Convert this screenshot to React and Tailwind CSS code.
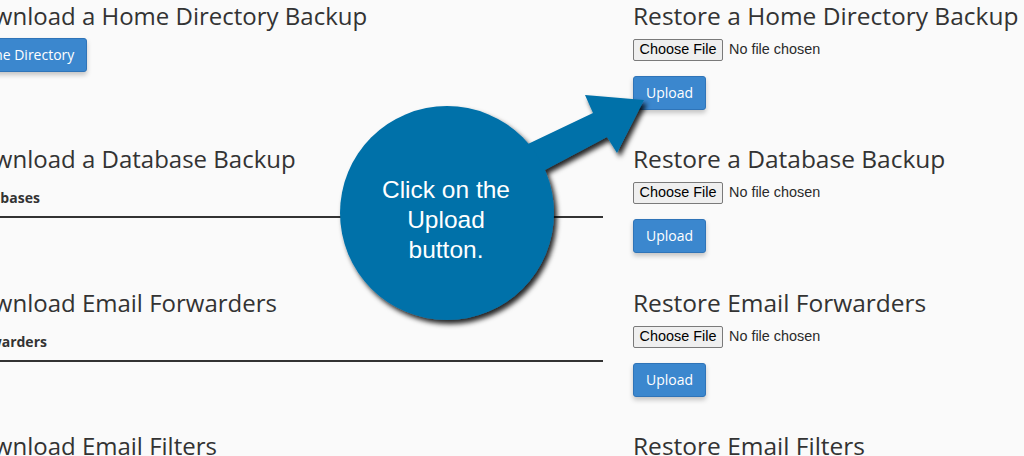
import React from "react";

const OS = { fontFamily: '"Open Sans", "Liberation Sans", sans-serif' };

function Heading({ children, size = "text-[24px]" }) {
  return (
    <h3 className={"m-0 whitespace-nowrap font-normal leading-[26px] text-[#333] " + size}>
      {children}
    </h3>
  );
}

function BlueButton({ children, className = "" }) {
  return (
    <div
      className={
        "inline-flex h-[34px] items-center whitespace-nowrap rounded-[3px] border border-[#2f74b8] bg-[#3b87ce] px-[12px] text-[14px] leading-[20px] text-white shadow-[0_3px_5px_rgba(0,0,0,0.22)] " +
        className
      }
    >
      {children}
    </div>
  );
}

function FileInput() {
  return (
    <div className="flex h-[22px] items-center whitespace-nowrap font-['Liberation_Sans',Arial,sans-serif] text-[14.4px]">
      <div className="flex h-[22px] w-[90px] items-center justify-center rounded-[2px] border border-[#7a7a7a] bg-[#efefef] text-black">
        Choose File
      </div>
      <span className="ml-[6px] text-[#2a2a2a]">No file chosen</span>
    </div>
  );
}

function RestoreSection({ title, h }) {
  return (
    <div className={"pt-[3px] " + h}>
      <Heading size="text-[24.5px]">{title}</Heading>
      <div className="mt-[10px]">
        <FileInput />
      </div>
      <div className="mt-[15px]">
        <BlueButton>Upload</BlueButton>
      </div>
    </div>
  );
}

function DownloadSection({ title, label, h }) {
  return (
    <div className={"pt-[3px] " + h}>
      <Heading>{title}</Heading>
      <div className="mt-[16px] ml-[5px] whitespace-nowrap text-[14px] font-bold leading-[20px] text-[#333]">
        {label}
      </div>
      <div className="mt-[8px] h-[2px] w-full bg-[#333]" />
    </div>
  );
}

export default function App() {
  return (
    <div
      className="relative h-[456px] w-[1024px] overflow-hidden bg-[#fafafa]"
      style={OS}
    >
      <div className="flex ml-[-38px]">
        <div className="w-[641px] shrink-0">
          <div className="h-[143px] pt-[3px]">
            <Heading>Download a Home Directory Backup</Heading>
            <div className="mt-[9px] ml-[-4px]">
              <BlueButton>Home Directory</BlueButton>
            </div>
          </div>
          <DownloadSection
            title="Download a Database Backup"
            label="Databases"
            h="h-[144px]"
          />
          <DownloadSection
            title="Download Email Forwarders"
            label="Forwarders"
            h="h-[143px]"
          />
          <div className="pt-[3px]">
            <Heading>Download Email Filters</Heading>
          </div>
        </div>
        <div className="ml-[30px] w-[636px] shrink-0">
          <RestoreSection title="Restore a Home Directory Backup" h="h-[143px]" />
          <RestoreSection title="Restore a Database Backup" h="h-[144px]" />
          <RestoreSection title="Restore Email Forwarders" h="h-[143px]" />
          <div className="pt-[3px]">
            <Heading size="text-[24.5px]">Restore Email Filters</Heading>
          </div>
        </div>
      </div>

      <svg
        className="pointer-events-none absolute left-0 top-0"
        width="1024"
        height="456"
        viewBox="0 0 1024 456"
      >
        <defs>
          <filter id="sh" x="-20%" y="-20%" width="140%" height="140%">
            <feDropShadow dx="3" dy="4" stdDeviation="2.5" floodColor="#000" floodOpacity="0.85" />
          </filter>
        </defs>
        <g filter="url(#sh)" fill="#0071a9">
          <polygon points="509,153 593,113 585,95 644,100 617,153 607,137 526,180" />
          <circle cx="447" cy="213" r="107" />
        </g>
      </svg>
      <div className="pointer-events-none absolute left-[346px] top-[175px] w-[200px] text-center font-['Liberation_Sans',Arial,sans-serif] text-[24.5px] leading-[30px] text-white">
        Click on the
        <br />
        Upload
        <br />
        button.
      </div>
    </div>
  );
}
